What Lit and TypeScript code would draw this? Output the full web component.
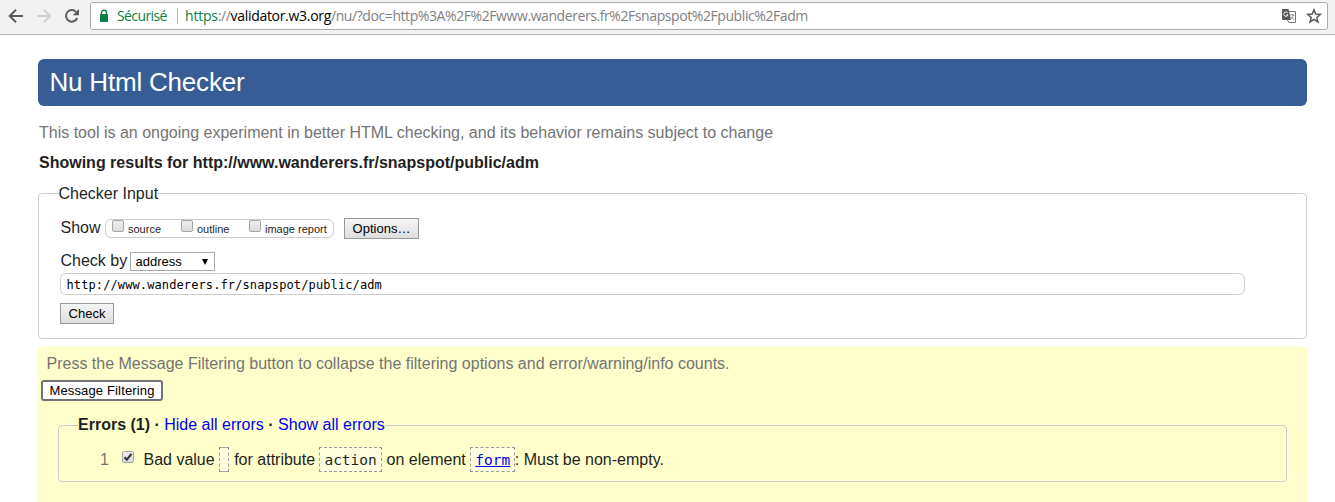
import { LitElement, html, css } from "lit";
import { customElement, property } from "lit/decorators.js";

@customElement("browser-bar")
class BrowserBar extends LitElement {
  static styles = css`
    :host { display: flex; height: 34px; background: #f2f2f2; border-bottom: 1px solid #b4b6b4; font: 14px/26px "Open Sans", "Noto Sans", sans-serif; }
    .nav { width: 90px; height: 34px; flex: none; display: block; }
    .box { box-sizing: border-box; margin-top: 2px; width: 1238px; height: 28px; border: 1px solid #a9aba9; border-radius: 3px; background: #fff; display: flex; align-items: center; white-space: nowrap; }
    .lock { margin-left: 8px; width: 10px; height: 14px; flex: none; }
    .secure { margin-left: 8px; width: 50px; color: #0b8043; letter-spacing: -0.6px; }
    .sep { margin-left: 10px; width: 1px; height: 16px; background: #b5b5b5; }
    .url { margin-left: 7px; color: #808080; letter-spacing: -0.42px; flex: 1; }
    .scheme { color: #0b8043; letter-spacing: -0.2px; }
    .host { color: #000; letter-spacing: -0.3px; }
    .translate { width: 16px; height: 16px; margin-right: 9px; }
    .star { width: 16px; height: 16px; margin-right: 5px; }
  `;
  render() {
    return html`
      <svg class="nav" viewBox="0 0 90 34" fill="none" stroke-width="2">
        <path d="M23 16H10M16 9.7L9.7 16L16 22.3" stroke="#5a5a5a" />
        <path d="M37 16H50M44 9.7L50.3 16L44 22.3" stroke="#d0d0d0" />
        <path d="M77.2 18A5.8 5.8 0 1 1 76 11.8" stroke="#5a5a5a" />
        <path d="M79 9V15.2H72.8Z" fill="#5a5a5a" />
      </svg>
      <div class="box">
        <svg class="lock" viewBox="0 0 10 14">
          <path d="M2.5 6V3.8a2.5 2.5 0 0 1 5 0V6" fill="none" stroke="#0b8043" stroke-width="1.4" />
          <rect x="1" y="5" width="8" height="8" rx="0.8" fill="#0b8043" />
        </svg>
        <span class="secure">Sécurisé</span><span class="sep"></span>
        <span class="url"><span class="scheme">https</span>://<span class="host">validator.w3.org</span>/nu/?doc=http%3A%2F%2Fwww.wanderers.fr%2Fsnapspot%2Fpublic%2Fadm</span>
        <svg class="translate" viewBox="0 0 16 16">
          <path d="M7 3.500H14.500V14.500H8L6.500 12" fill="#fff" stroke="#777" />
          <path d="M1 1H7.500L10 12H2a1 1 0 0 1-1-1Z" fill="#5a5a5a" />
          <path d="M6.800 5A2.200 2.200 0 1 0 7 7H5" fill="none" stroke="#fff" />
          <path d="M9 7h4.500M11.200 6v1M12.500 7c-.4 2-1.500 3-2.700 4M10 8.500l3 3.500" fill="none" stroke="#888" stroke-width=".9" />
        </svg>
        <svg class="star" viewBox="0 0 16 16">
          <path d="M8 1.700L9.700 6.100L14.400 6.400L10.800 9.400L12 14L8 11.400L4 14L5.200 9.400L1.600 6.400L6.300 6.100Z" fill="none" stroke="#5a5a5a" stroke-width="1.500" />
        </svg>
      </div>`;
  }
}

@customElement("check-box")
class CheckBox extends LitElement {
  @property({ type: Boolean }) checked = false;
  static styles = css`
    :host { display: block; box-sizing: border-box; width: 12px; height: 12px; border: 1px solid #a6a6a6; border-radius: 2px; background: linear-gradient(#ededed, #dcdcdc); flex: none; }
    .mark { display: block; width: 10px; height: 10px; }
  `;
  render() {
    return this.checked
      ? html`<svg class="mark" viewBox="0 0 10 10"><path d="M1.5 5.2L3.8 7.6L8.5 1.8" fill="none" stroke="#333" stroke-width="2.1" /></svg>`
      : null;
  }
}

@customElement("app-root")
class AppRoot extends LitElement {
  static styles = css`
    :host { display: block; width: 1335px; height: 502px; overflow: hidden; background: #fff; color: #1f1f1f; font: 16px/20px "Liberation Sans", Arial, sans-serif; white-space: nowrap; }
    .page { margin: 24px 28px 0 38px; }
    .title { margin: 0; height: 47px; padding-left: 11.5px; border-radius: 6px; background: #365d95; color: #fff; font-size: 26px; line-height: 46px; font-weight: 400; letter-spacing: -0.2px; }
    .note { margin: 17px 0 0 1px; color: #747474; }
    .showing { margin: 10px 0 0 1px; font-weight: 700; }
    .group { box-sizing: border-box; margin: 0; padding: 0; border: 1px solid #ccc; border-radius: 4px; min-width: 0; }
    .input { margin-top: 11px; height: 155px; padding-left: 21px; }
    .legend { padding: 0; height: 20px; }
    .input .legend { margin-left: -1.5px; height: 19px; }
    .row { display: flex; }
    .show { margin-top: 15px; height: 21px; }
    .opts { box-sizing: border-box; margin: 1px 10px 0 5px; width: 229px; height: 19px; border: 1px solid #ccc; border-radius: 6px; display: flex; font-size: 11px; line-height: 19px; }
    .opts check-box { margin: 0 4px 0 6px; }
    .source { width: 47px; }
    .outline { width: 46px; }
    .label { width: 39.5px; margin-left: 0.5px; }
    .btn { box-sizing: border-box; height: 21px; border: 1px solid #999; background: linear-gradient(#f5f5f5, #dedede); color: #000; font-size: 13px; line-height: 19px; text-align: center; }
    .options { width: 75px; }
    .by { margin-top: 13px; height: 21px; }
    .bylabel { width: 69.5px; margin-left: 0.5px; line-height: 18px; }
    .select { box-sizing: border-box; width: 85px; height: 19px; border: 1px solid #a9a9a9; background: #fff; color: #000; padding: 0 6px 0 4.5px; display: flex; justify-content: space-between; align-items: center; font-size: 13px; line-height: 17px; }
    .caret { width: 6px; height: 6px; }
    .field { box-sizing: border-box; width: 1185px; height: 22px; border: 1px solid #ccc; border-radius: 6px; padding-left: 5.5px; color: #000; font: 12px/22px "DejaVu Sans Mono", monospace; letter-spacing: 0.11px; }
    .check { margin-top: 8px; width: 54px; }
    .results { box-sizing: border-box; margin-top: 8px; height: 155px; background: #ffc; padding: 7px 20px 0; }
    .hint { margin-left: -11.5px; color: #747474; }
    .filter { margin: 6px 0 0 -17px; width: 122px; height: 21px; border: 2px solid #6f7577; border-radius: 3px; background: #fff; line-height: 17px; letter-spacing: 0.15px; }
    .errors { margin-top: 14px; height: 67px; padding-left: 20px; }
    .errors .legend { margin-left: -1px; }
    .link { color: #00e; }
    .item { margin-top: 12px; height: 26px; line-height: 26px; align-items: flex-start; }
    .num { width: 30px; text-align: right; color: #747474; }
    .item check-box { margin: 4px 9.5px 0 13px; }
    .code { display: inline-block; box-sizing: border-box; height: 25px; border: 1px dashed #999; background: #ffffdf; font: 14.5px/25px "DejaVu Sans Mono", monospace; text-align: center; }
    .empty { width: 10px; margin: 0 5px 0 4.5px; }
    .action { width: 63px; margin: 0 4.5px 0 4px; }
    .form { width: 45px; margin-left: 4.5px; color: #00e; text-decoration: underline; }
    .tail { margin-left: -0.5px; }
  `;
  render() {
    return html`
      <browser-bar></browser-bar>
      <main class="page">
        <h1 class="title">Nu Html Checker</h1>
        <div class="note">This tool is an ongoing experiment in better HTML checking, and its behavior remains subject to change</div>
        <div class="showing">Showing results for http://www.wanderers.fr/snapspot/public/adm</div>
        <fieldset class="group input">
          <legend class="legend">Checker Input</legend>
          <div class="row show">
            <span class="label">Show</span>
            <div class="opts">
              <check-box></check-box><span class="source">source</span>
              <check-box></check-box><span class="outline">outline</span>
              <check-box></check-box><span>image report</span>
            </div>
            <div class="btn options">Options…</div>
          </div>
          <div class="row by">
            <span class="bylabel">Check by</span>
            <div class="select"><span>address</span><svg class="caret" viewBox="0 0 6 6"><path d="M0 0H6L3 6Z" /></svg></div>
          </div>
          <div class="field">http://www.wanderers.fr/snapspot/public/adm</div>
          <div class="btn check">Check</div>
        </fieldset>
        <section class="results">
          <div class="hint">Press the Message Filtering button to collapse the filtering options and error/warning/info counts.</div>
          <div class="btn filter">Message Filtering</div>
          <fieldset class="group errors">
            <legend class="legend"><b>Errors (1)</b><b> · </b><span class="link">Hide all errors</span><b> · </b><span class="link">Show all errors</span></legend>
            <div class="row item">
              <span class="num">1</span><check-box checked></check-box>
              <span>Bad value</span><span class="code empty"></span><span>for attribute</span><span class="code action">action</span><span>on element</span><span class="code form">form</span><span class="tail">: Must be non-empty.</span>
            </div>
          </fieldset>
        </section>
      </main>`;
  }
}
